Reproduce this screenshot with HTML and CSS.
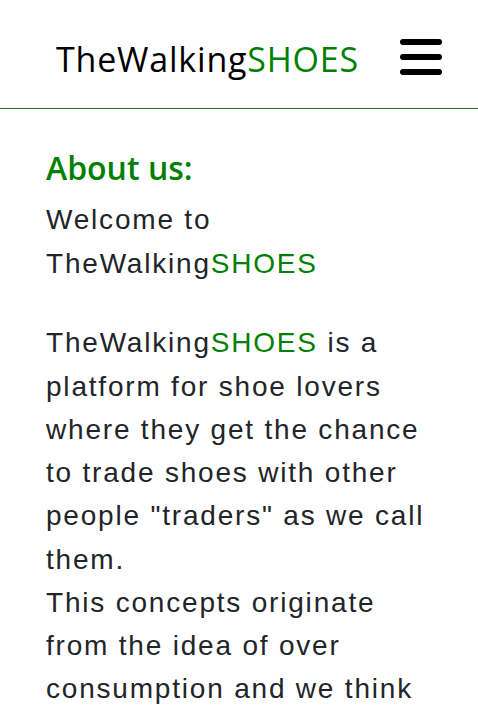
FILE: index.html
```html
<!DOCTYPE html>
<html lang="en">
<head>
<meta charset="utf-8">
<title>TheWalkingSHOES</title>
<link rel="stylesheet" href="styles.css">
</head>
<body>
<header class="topbar">
  <h1 class="brand">TheWalking<span class="green">SHOES</span></h1>
  <button class="menu" aria-label="Menu">
    <span class="bar"></span><span class="bar"></span><span class="bar"></span>
  </button>
</header>
<main class="content">
  <h2 class="title">About us:</h2>
  <p class="lead">Welcome to TheWalking<span class="green">SHOES</span></p>
  <p class="text">TheWalking<span class="green">SHOES</span> is a platform for shoe lovers where they get the chance to trade shoes with other people "traders" as we call them.<br>This concepts originate from the idea of over consumption and we think that trading shoes is a great way to reduce it.</p>
</main>
</body>
</html>
```
FILE: styles.css
```css
* { box-sizing: border-box; }
html, body { margin: 0; padding: 0; background: #fff; }
body { font-family: "Liberation Sans", Arial, sans-serif; color: #212529; overflow: hidden; }
.green { color: #008000; }
.topbar {
  height: 109px;
  border-bottom: 1px solid #2a6a2a;
  display: flex;
  align-items: center;
  justify-content: space-between;
  padding: 0 36px 0 56px;
}
.brand {
  margin: 0;
  font-family: "Open Sans", "Noto Sans", sans-serif;
  font-weight: 400;
  font-size: 34px;
  color: #000;
  letter-spacing: 0.8px;
  line-height: 1.2;
  margin-top: 10px;
}
.menu {
  border: 0; background: none; padding: 0;
  width: 42px; height: 36px;
  display: flex; flex-direction: column; justify-content: space-between;
  margin-top: 6px;
}
.bar { display: block; height: 6px; border-radius: 3px; background: #000; width: 100%; }
.content { padding: 40px 40px 0 46px; }
.title {
  margin: 0 0 11px;
  font-family: "Open Sans", "Noto Sans", sans-serif;
  font-weight: 600;
  font-size: 32px;
  color: #008000;
  line-height: 1.2;
}
.lead, .text {
  margin: 0;
  font-size: 28px;
  line-height: 43.25px;
  letter-spacing: 1.8px;
}
.lead { margin-bottom: 36.5px; }
```
